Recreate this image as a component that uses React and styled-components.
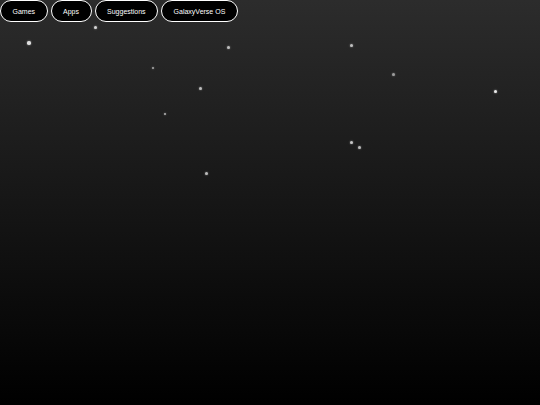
import React from 'react';
import styled, { createGlobalStyle } from 'styled-components';

const GlobalStyle = createGlobalStyle`
  html, body {
    margin: 0;
    padding: 0;
    height: 100%;
  }
  body {
    font-family: "Liberation Sans", Arial, sans-serif;
    -webkit-font-smoothing: antialiased;
  }
  #root {
    height: 100%;
  }
`

const Page = styled.div`
  position: relative;
  width: 100%;
  height: 100vh;
  overflow: hidden;
  background: linear-gradient(to bottom, #2c2c2c 0%, #000000 100%);
`
const Nav = styled.nav`
  display: flex;
  gap: 3px;
  position: relative;
  z-index: 2;
`
const NavButton = styled.button`
  height: 22px;
  padding: 0 11.5px;
  background: #000;
  color: #fff;
  border: 1.3px solid #fff;
  border-radius: 11px;
  font-family: "Liberation Sans", Arial, sans-serif;
  font-size: 7px;
  cursor: pointer;
`
const Star = styled.span`
  position: absolute;
  width: ${p => p.size}px;
  height: ${p => p.size}px;
  border-radius: 50%;
  background: #fff;
  opacity: ${p => p.glow};
  box-shadow: 0 0 2px rgba(255, 255, 255, 0.7);
`

const links = ['Games', 'Apps', 'Suggestions', 'GalaxyVerse OS'];

// x, y, size, opacity
const stars = [
  [29, 43, 3.5, 0.85],
  [95, 27, 3, 0.8],
  [228, 47, 3, 0.7],
  [153, 68, 2.5, 0.6],
  [200, 88, 3, 0.7],
  [165, 114, 2.5, 0.65],
  [206, 173, 3, 0.7],
  [351, 45, 3, 0.7],
  [393, 74, 3, 0.55],
  [495, 91, 3, 0.9],
  [351, 142, 3, 0.75],
  [359, 147, 3, 0.7],
];

export default function App() {
  return (
    <>
      <GlobalStyle />
      <Page>
        <Nav>
          {links.map(l => <NavButton key={l}>{l}</NavButton>)}
        </Nav>
        {stars.map(([x, y, s, o], i) => (
          <Star key={i} size={s} glow={o} style={{ left: x - s / 2, top: y - s / 2 }} />
        ))}
      </Page>
    </>
  );
}
